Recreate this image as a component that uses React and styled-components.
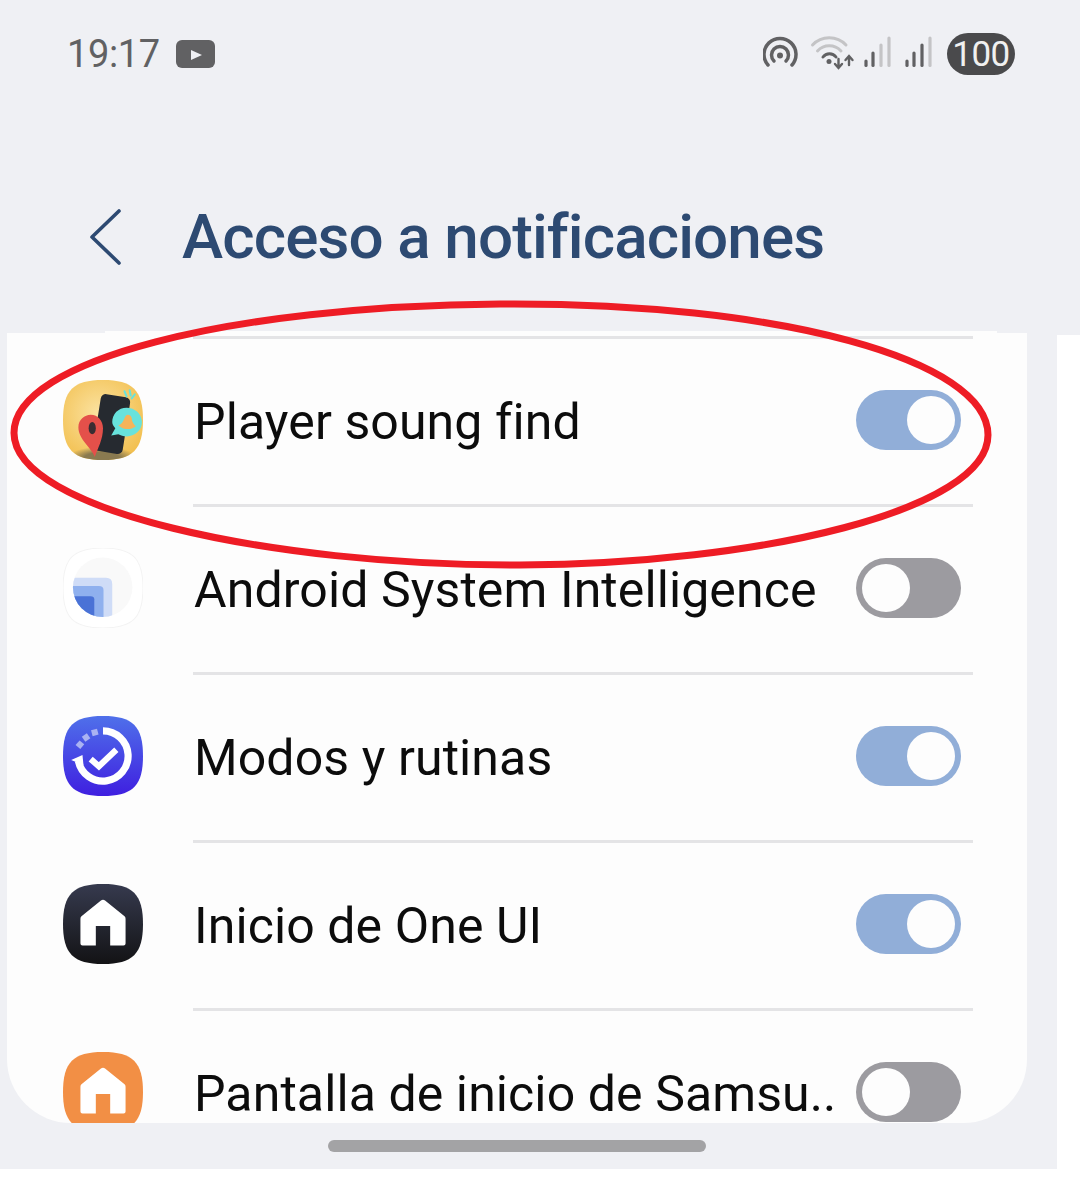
import React from 'react';
import styled, { createGlobalStyle } from 'styled-components';

const SQUIRCLE = 'M39 0C68 0 78 10 78 39C78 68 68 78 39 78C10 78 0 68 0 39C0 10 10 0 39 0Z';
const HOUSE = 'M37 16Q39 14.5 41 16L60 31.5Q61 32.3 61 34V58Q61 60 59 60H46V41H32V60H19Q17 60 17 58V34Q17 32.3 18 31.5Z';

const GlobalStyle = createGlobalStyle`
  html, body {
    margin: 0;
    padding: 0;
    background: #fff;
  }
  * {
    box-sizing: border-box;
  }
`;

const Page = styled.div`
  position: relative;
  width: 1080px;
  height: 1185px;
  background: #fff;
  overflow: hidden;
  font-family: Roboto, 'Noto Sans', sans-serif;
`;

const Header = styled.header`
  height: 335px;
  margin-bottom: -2px;
  background: #eff0f4;
`;

const StatusBar = styled.div`
  display: flex;
  align-items: center;
  justify-content: space-between;
  height: 108px;
  padding: 0 65px 0 67px;
`;

const StatusLeft = styled.div`
  display: flex;
  align-items: center;
  gap: 16px;
`;

const Clock = styled.span`
  font-size: 38px;
  line-height: 44px;
  color: #616163;
  letter-spacing: -0.4px;
`;

const StatusRight = styled.div`
  display: flex;
  align-items: center;
  gap: 14px;
`;

const Battery = styled.span`
  display: flex;
  align-items: center;
  justify-content: center;
  width: 68px;
  height: 42px;
  border-radius: 21px;
  background: #4a4a4c;
  color: #f0f0f0;
  font-size: 35px;
  letter-spacing: -0.5px;
`;

const TitleRow = styled.div`
  display: flex;
  align-items: center;
  height: 96px;
  margin-top: 81px;
  padding-left: 88px;
`;

const BackIcon = styled.svg`
  width: 34px;
  height: 58px;
  margin-right: 60px;
`;

const Title = styled.h1`
  margin: 0;
  font-size: 62px;
  font-weight: 500;
  line-height: 96px;
  color: #2d4a72;
  letter-spacing: -0.9px;
  white-space: nowrap;
`;

const Screen = styled.main`
  position: relative;
  display: flex;
  flex-direction: column;
  width: 1057px;
  height: 836px;
  padding-left: 7px;
  background: #eff0f4;

  &::before {
    content: '';
    position: absolute;
    left: 105px;
    right: 60px;
    top: -2px;
    height: 2px;
    background: #fdfdfd;
  }
`;

const Card = styled.section`
  width: 1020px;
  height: 790px;
  padding-top: 3px;
  background: #fdfdfd;
  border-radius: 0 0 64px 64px;
  overflow: hidden;
`;

const Row = styled.div`
  display: flex;
  align-items: center;
  height: 168px;
  padding: 0 54px 0 56px;
`;

const IconBox = styled.svg`
  flex: none;
  width: 80px;
  height: 80px;
  margin-right: 50px;
`;

const RowBody = styled.div`
  flex: 1;
  display: flex;
  align-items: center;
  justify-content: space-between;
  height: 168px;
  padding: 0 12px 0 1px;
  border-top: 3px solid #e4e4e6;
`;

const Label = styled.span`
  font-size: 50px;
  line-height: 60px;
  color: #0c0c0c;
  letter-spacing: 0.1px;
  white-space: nowrap;
`;

const Switch = styled.span`
  flex: none;
  display: flex;
  justify-content: ${(p) => (p.$on ? 'flex-end' : 'flex-start')};
  align-items: center;
  width: 105px;
  height: 60px;
  margin-bottom: 3px;
  padding: 0 6px;
  border-radius: 30px;
  background: ${(p) => (p.$on ? '#91aed8' : '#9c9ba0')};
`;

const Knob = styled.span`
  width: 48px;
  height: 48px;
  border-radius: 50%;
  background: #fdfdfd;
`;

const Footer = styled.div`
  flex: 1;
  display: flex;
  align-items: center;
  justify-content: center;
  width: 1020px;
`;

const HomeBar = styled.div`
  width: 378px;
  height: 12px;
  border-radius: 6px;
  background: #a3a3a5;
`;

const Circle = styled.svg`
  position: absolute;
  left: 0;
  top: 0;
  width: 1080px;
  height: 1185px;
  pointer-events: none;
`;

const PlayerIcon = () => (
  <IconBox viewBox="0 0 78 78">
    <defs>
      <radialGradient id="py" cx="45%" cy="42%" r="65%">
        <stop offset="0" stopColor="#fbe3a2" />
        <stop offset="1" stopColor="#f2bf4e" />
      </radialGradient>
      <radialGradient id="ps" cx="50%" cy="50%" r="50%">
        <stop offset="0.5" stopColor="#8a7a50" />
        <stop offset="1" stopColor="#8a7a50" stopOpacity="0" />
      </radialGradient>
      <clipPath id="pc"><path d={SQUIRCLE} /></clipPath>
    </defs>
    <path d={SQUIRCLE} fill="url(#py)" />
    <g clipPath="url(#pc)">
      <ellipse cx="38" cy="76" rx="34" ry="11" fill="url(#ps)" />
    </g>
    <rect x="33" y="15" width="29" height="56" rx="5" fill="#262a30" transform="rotate(9 48 43)" />
    <path d="M31 75C28 66 15 58 15 46C15 39 21 34 27 34C34 34 39 40 39 47C39 58 34 66 31 75Z" fill="#e4504a" />
    <ellipse cx="28.5" cy="47" rx="3.5" ry="6" fill="#3a2d32" />
    <path d="M62 27C70 27 77 33 77 41C77 49 70 55 62 55C59 55 56 54 54 53L47 54L51 47C49 45 48 43 48 41C48 33 54 27 62 27Z" fill="#68e2dc" />
    <path d="M54 44C58 43 59 39 61 35C63 33 66 34 67 37C67 41 69 43 71 45C66 49 59 49 54 44Z" fill="#f5b45a" />
    <path d="M60 11L62 16M65 10L66 15M70 14L67 18" stroke="#68e2dc" strokeWidth="2" strokeLinecap="round" />
  </IconBox>
);

const IntelligenceIcon = () => (
  <IconBox viewBox="0 0 78 78">
    <defs>
      <clipPath id="ai"><circle cx="38.7" cy="38.3" r="29" /></clipPath>
    </defs>
    <path d={SQUIRCLE} fill="#fff" stroke="#f3f3f3" strokeWidth="1" />
    <circle cx="38.7" cy="38.3" r="29" fill="#f9f9f9" />
    <g clipPath="url(#ai)">
      <path d="M9 29H42Q48 29 48 35V70H9Z" fill="#cfdcf7" />
      <path d="M9 37H35Q39.5 37 39.5 41V70H9Z" fill="#8fb0ee" />
      <path d="M9 47H27Q30.5 47 30.5 50V70H9Z" fill="#4a72d6" />
    </g>
  </IconBox>
);

const ModesIcon = () => (
  <IconBox viewBox="0 0 78 78">
    <defs>
      <linearGradient id="mg" x1="0" y1="0" x2="0" y2="1">
        <stop offset="0" stopColor="#4f70ea" />
        <stop offset="1" stopColor="#3f1fe0" />
      </linearGradient>
    </defs>
    <path d={SQUIRCLE} fill="url(#mg)" />
    <path d="M39 14.5A24.5 24.5 0 1 1 15 44" fill="none" stroke="#fff" strokeWidth="7" />
    <path d="M8 43L19 38L20 48Z" fill="#fff" />
    <g fill="#aab2f2">
      <rect x="13.5" y="25" width="6" height="6" transform="rotate(-50 16.5 28)" />
      <rect x="19.5" y="18" width="6" height="6" transform="rotate(-35 22.5 21)" />
      <rect x="28" y="13" width="6" height="6" transform="rotate(-15 31 16)" />
    </g>
    <path d="M27 42L35 49L52 33" fill="none" stroke="#fff" strokeWidth="6" />
  </IconBox>
);

const HomeIcon = ({ id, from, to }) => (
  <IconBox viewBox="0 0 78 78">
    <defs>
      <linearGradient id={id} x1="0" y1="0" x2="0" y2="1">
        <stop offset="0" stopColor={from} />
        <stop offset="1" stopColor={to} />
      </linearGradient>
    </defs>
    <path d={SQUIRCLE} fill={`url(#${id})`} />
    <path d={HOUSE} fill="#fff" />
  </IconBox>
);

const apps = [
  { name: 'Player soung find', on: true, icon: <PlayerIcon /> },
  { name: 'Android System Intelligence', on: false, icon: <IntelligenceIcon /> },
  { name: 'Modos y rutinas', on: true, icon: <ModesIcon /> },
  { name: 'Inicio de One UI', on: true, icon: <HomeIcon id="hd" from="#363a4e" to="#131315" /> },
  { name: 'Pantalla de inicio de Samsu..', on: false, icon: <HomeIcon id="ho" from="#f28f45" to="#f28f45" /> },
];

const StatusIcons = () => (
  <svg width="170" height="42" viewBox="763 34 170 42">
    <g fill="none" stroke="#616163" strokeLinecap="round">
      <path d="M768 66A16 16 0 1 1 792 66" strokeWidth="3.5" />
      <path d="M774 62A8.5 8.5 0 1 1 786 62" strokeWidth="3.5" />
    </g>
    <circle cx="780" cy="56.5" r="3" fill="#616163" />
    <g fill="none" strokeLinecap="round">
      <path d="M812.5 46A23 23 0 0 1 846 46" stroke="#c4c4c6" strokeWidth="3" />
      <path d="M817.5 52A16 16 0 0 1 841 52" stroke="#c4c4c6" strokeWidth="3" />
      <path d="M823 58A8 8 0 0 1 836 58" stroke="#616163" strokeWidth="3" />
      <path d="M838.5 60V68M835 65L838.5 69L842 65M849 66V58M845.5 61L849 57L852.5 61" stroke="#616163" strokeWidth="2.4" />
    </g>
    <circle cx="829" cy="62.5" r="2.5" fill="#616163" />
    {[
      [866, 62, '#616163'], [873, 54, '#616163'], [881, 46, '#c4c4c6'], [889, 39, '#c4c4c6'],
      [907, 62, '#616163'], [914, 54, '#616163'], [922, 46, '#616163'], [930, 39, '#c4c4c6'],
    ].map(([x, y, c]) => (
      <line key={x} x1={x} x2={x} y1={y} y2="66.5" stroke={c} strokeWidth="3.2" strokeLinecap="round" />
    ))}
  </svg>
);

const App = () => (
  <Page>
    <GlobalStyle />
    <Header>
      <StatusBar>
        <StatusLeft>
          <Clock>19:17</Clock>
          <svg width="39" height="28" viewBox="0 0 39 28">
            <rect width="39" height="28" rx="6" fill="#616163" />
            <path d="M15 10L26 15L15 20Z" fill="#eff0f4" />
          </svg>
        </StatusLeft>
        <StatusRight>
          <StatusIcons />
          <Battery>100</Battery>
        </StatusRight>
      </StatusBar>
      <TitleRow>
        <BackIcon viewBox="0 0 34 58">
          <path d="M31 3L4 29L31 55" fill="none" stroke="#2d4a72" strokeWidth="3.6" strokeLinecap="round" strokeLinejoin="round" />
        </BackIcon>
        <Title>Acceso a notificaciones</Title>
      </TitleRow>
    </Header>
    <Screen>
      <Card>
        {apps.map((app) => (
          <Row key={app.name}>
            {app.icon}
            <RowBody>
              <Label>{app.name}</Label>
              <Switch $on={app.on}><Knob /></Switch>
            </RowBody>
          </Row>
        ))}
      </Card>
      <Footer>
        <HomeBar />
      </Footer>
    </Screen>
    <Circle viewBox="0 0 1080 1185">
      <path
        d="M500 304C780 302 988 360 988 435C988 510 760 564 520 565C270 566 14 510 14 433C14 360 230 306 500 304Z"
        fill="none"
        stroke="#ee1c25"
        strokeWidth="7"
      />
    </Circle>
  </Page>
);

export default App;
